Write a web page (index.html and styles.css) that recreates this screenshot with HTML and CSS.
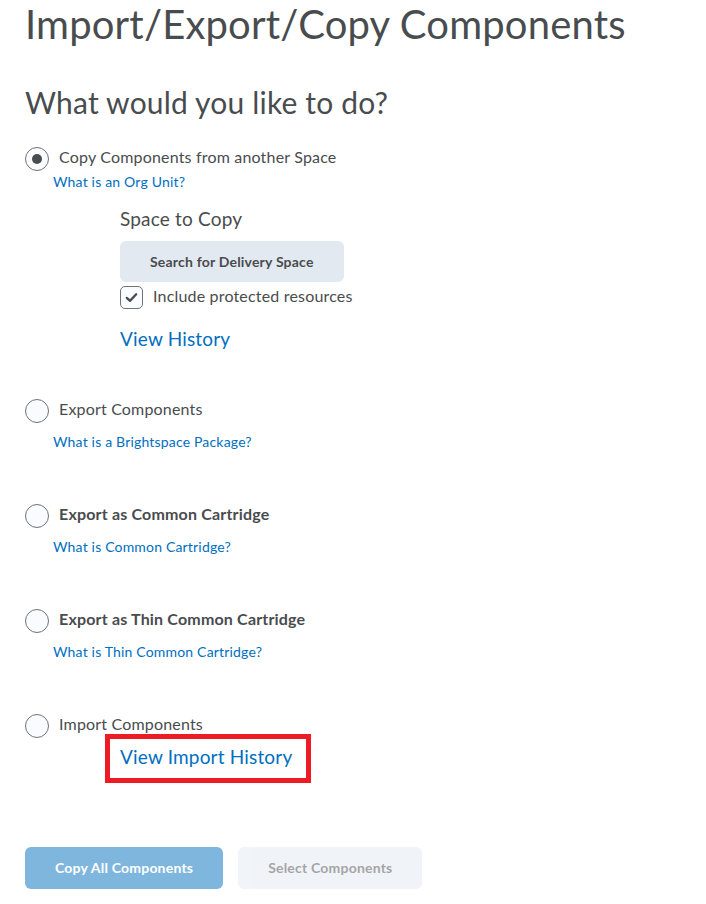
FILE: index.html
```html
<!DOCTYPE html>
<html lang="en">
<head>
<meta charset="utf-8">
<title>Import/Export/Copy Components</title>
<link rel="stylesheet" href="styles.css">
</head>
<body>
<main class="page">
  <h1 class="title">Import/Export/Copy Components</h1>
  <h2 class="subtitle">What would you like to do?</h2>

  <section class="option option-first">
    <div class="option-row">
      <span class="radio radio-checked"></span>
      <span class="option-label">Copy Components from another Space</span>
    </div>
    <a class="help-link help-link-tight" href="#">What is an Org Unit?</a>
    <div class="copy-panel">
      <div class="panel-heading">Space to Copy</div>
      <button class="btn btn-secondary btn-search" type="button">Search for Delivery Space</button>
      <label class="check-row">
        <span class="checkbox">
          <svg width="15" height="15" viewBox="0 0 16 16"><path d="M3 8.4 L6.4 11.6 L13 4.6" fill="none" stroke="#494c4e" stroke-width="2.4" stroke-linecap="round" stroke-linejoin="round"/></svg>
        </span>
        <span class="check-label">Include protected resources</span>
      </label>
      <a class="big-link" href="#">View History</a>
    </div>
  </section>

  <section class="option option-after-panel">
    <div class="option-row">
      <span class="radio"></span>
      <span class="option-label">Export Components</span>
    </div>
    <a class="help-link" href="#">What is a Brightspace Package?</a>
  </section>

  <section class="option option-spaced">
    <div class="option-row">
      <span class="radio"></span>
      <span class="option-label option-label-bold">Export as Common Cartridge</span>
    </div>
    <a class="help-link" href="#">What is Common Cartridge?</a>
  </section>

  <section class="option option-spaced">
    <div class="option-row">
      <span class="radio"></span>
      <span class="option-label option-label-bold">Export as Thin Common Cartridge</span>
    </div>
    <a class="help-link" href="#">What is Thin Common Cartridge?</a>
  </section>

  <section class="option option-spaced">
    <div class="option-row">
      <span class="radio"></span>
      <span class="option-label">Import Components</span>
    </div>
    <div class="highlight-box">
      <a class="big-link" href="#">View Import History</a>
    </div>
  </section>

  <div class="actions">
    <button class="btn btn-primary btn-disabled" type="button">Copy All Components</button>
    <button class="btn btn-secondary btn-disabled" type="button">Select Components</button>
  </div>
</main>
</body>
</html>
```

FILE: styles.css
```css
html, body {
  margin: 0;
  padding: 0;
  background: #ffffff;
}

body {
  font-family: Lato, "Open Sans", "Liberation Sans", sans-serif;
  color: #494c4e;
  letter-spacing: 0.18px;
}

.page {
  padding: 0 0 20px 25px;
}

.title {
  margin: 0;
  font-size: 40px;
  line-height: 48px;
  font-weight: 400;
  color: #494c4e;
}

.subtitle {
  margin: 36px 0 0 0;
  font-size: 30px;
  line-height: 36px;
  font-weight: 400;
  color: #494c4e;
}

.option-first {
  margin-top: 25px;
}

.option-after-panel {
  margin-top: 46px;
}

.option-spaced {
  margin-top: 50px;
}

.option-row {
  display: flex;
  align-items: flex-start;
  gap: 10px;
}

.radio {
  box-sizing: border-box;
  flex: none;
  width: 24px;
  height: 24px;
  margin-top: 2px;
  border: 1px solid #6e7376;
  border-radius: 50%;
  background: #f9fbff;
  display: flex;
  align-items: center;
  justify-content: center;
}

.radio-checked::after {
  content: "";
  width: 10px;
  height: 10px;
  border-radius: 50%;
  background: #494c4e;
}

.option-label {
  font-size: 16px;
  line-height: 24px;
}

.option-label-bold {
  font-weight: 700;
}

.help-link {
  display: block;
  width: fit-content;
  margin: 9px 0 0 28px;
  font-size: 14px;
  line-height: 20px;
  color: #006fbf;
  text-decoration: none;
}

.help-link-tight {
  margin-top: 1px;
}

.copy-panel {
  margin-left: 95px;
}

.panel-heading {
  margin-top: 15px;
  font-size: 19px;
  line-height: 24px;
}

.btn {
  box-sizing: border-box;
  border: none;
  border-radius: 6px;
  padding: 0 30px;
  font-family: Lato, "Open Sans", "Liberation Sans", sans-serif;
  font-size: 14px;
  font-weight: 700;
  line-height: 20px;
  letter-spacing: 0.2px;
  cursor: pointer;
}

.btn-secondary {
  background: #e3e9f1;
  color: #494c4e;
}

.btn-primary {
  background: #006fbf;
  color: #ffffff;
}

.btn-search {
  display: block;
  margin-top: 10px;
  height: 41px;
}

.check-row {
  display: flex;
  align-items: flex-start;
  gap: 10px;
  margin-top: 2px;
}

.checkbox {
  box-sizing: border-box;
  flex: none;
  width: 23px;
  height: 23px;
  margin-top: 2px;
  border: 1px solid #6e7376;
  border-radius: 5px;
  background: #f9fbff;
  display: flex;
  align-items: center;
  justify-content: center;
}

.check-label {
  font-size: 16px;
  line-height: 24px;
}

.big-link {
  display: block;
  width: fit-content;
  margin-top: 18px;
  font-size: 19px;
  line-height: 24px;
  color: #006fbf;
  text-decoration: none;
}

.highlight-box {
  display: block;
  width: fit-content;
  margin: -4px 0 0 80px;
  border: 5px solid #ed1c24;
  padding: 6px 14px 9px 10px;
}

.highlight-box .big-link {
  margin-top: 0;
}

.actions {
  display: flex;
  gap: 15px;
  margin-top: 64px;
}

.actions .btn {
  height: 42px;
}

.btn-disabled {
  opacity: 0.5;
  cursor: default;
}
```
